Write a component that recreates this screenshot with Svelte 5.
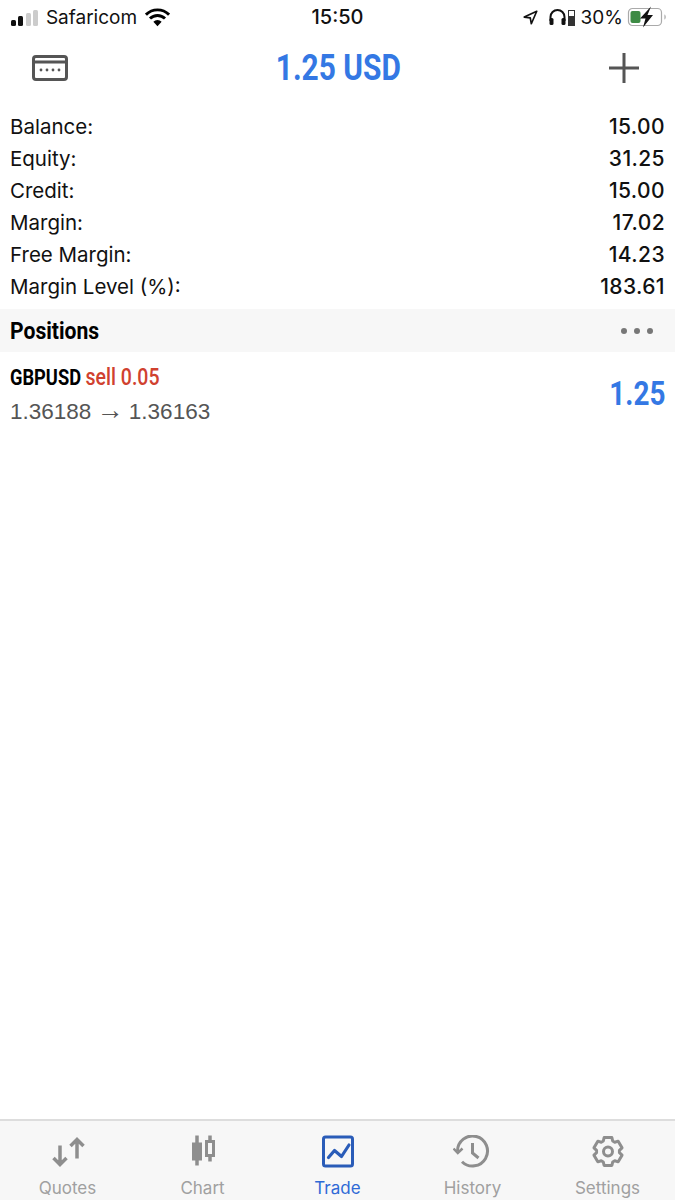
<script>
  const rows = [
    ["Balance:", "15.00"],
    ["Equity:", "31.25"],
    ["Credit:", "15.00"],
    ["Margin:", "17.02"],
    ["Free Margin:", "14.23"],
    ["Margin Level (%):", "183.61"],
  ];
  const tabs = ["Quotes", "Chart", "Trade", "History", "Settings"];

  // six toothed gear outline, centred on 16,16
  function gearPath() {
    let d = "";
    for (let i = 0; i < 6; i++) {
      const a = (i * Math.PI) / 3 - Math.PI / 2;
      const pts = [[11.5, -0.42], [14.5, -0.27], [14.5, 0.27], [11.5, 0.42]];
      for (const [r, o] of pts) {
        const x = 16 + r * Math.cos(a + o);
        const y = 16 + r * Math.sin(a + o);
        d += (d ? "L" : "M") + x.toFixed(2) + " " + y.toFixed(2);
      }
    }
    return d + "Z";
  }
</script>

<main class="screen">
  <div class="status">
    <div class="status-left">
      <span class="signal"><i class="on s1"></i><i class="on s2"></i><i class="s3"></i><i class="s4"></i></span>
      <span class="carrier">Safaricom</span>
      <svg class="wifi" width="25" height="19" viewBox="0 0 26 19">
        <path d="M1 6.500a17 17 0 0 1 24 0" fill="none" stroke="#000" stroke-width="3"/>
        <path d="M5.200 10.600a11 11 0 0 1 15.600 0" fill="none" stroke="#000" stroke-width="3"/>
        <path d="M13 18.500l-4.300-4.600a6 6 0 0 1 8.600 0z" fill="#000"/>
      </svg>
    </div>
    <div class="clock">15:50</div>
    <div class="status-right">
      <svg width="15" height="15" viewBox="0 0 18 18" class="loc">
        <path d="M16.500 1.500L1.500 8.500l7.200 1 1.300 7z" fill="none" stroke="#111" stroke-width="2" stroke-linejoin="round"/>
      </svg>
      <svg width="17" height="18" viewBox="0 0 17 18" class="phones">
        <path d="M1.500 13V9a7 7 0 0 1 14 0v4" fill="none" stroke="#111" stroke-width="2"/>
        <rect x="0.500" y="10" width="4" height="7" rx="1.500" fill="#111"/>
        <rect x="12.500" y="10" width="4" height="7" rx="1.500" fill="#111"/>
      </svg>
      <span class="tiny-batt"><b></b></span>
      <span class="pct">30%</span>
      <svg width="40" height="22" viewBox="0 0 40 22" class="batt">
        <rect x="1.500" y="2.500" width="33" height="17" rx="4" fill="#fff" stroke="#aaa" stroke-width="1.200"/>
        <rect x="3.500" y="5" width="10" height="12" rx="2" fill="#3d8b45"/>
        <path d="M37.500 8.500c1.500.4 1.500 4.600 0 5z" fill="#999"/>
        <path d="M24 0.500L13 12.500h5.500L16 21.500 26 9h-5.500z" fill="#111"/>
      </svg>
    </div>
  </div>

  <header class="nav">
    <svg class="card" width="36" height="26" viewBox="0 0 36 26">
      <rect x="1.500" y="1.500" width="33" height="23" rx="2.500" fill="none" stroke="#555" stroke-width="3"/>
      <rect x="2" y="5.500" width="32" height="3" fill="#555"/>
      <g fill="#555"><circle cx="9" cy="15" r="1.400"/><circle cx="15" cy="15" r="1.400"/><circle cx="21" cy="15" r="1.400"/><circle cx="27" cy="15" r="1.400"/></g>
    </svg>
    <h1>1.25 USD</h1>
    <svg class="plus" width="30" height="30" viewBox="0 0 30 30">
      <path d="M15 0v30M0 15h30" stroke="#555" stroke-width="3"/>
    </svg>
  </header>

  <section class="summary">
    {#each rows as [label, value]}
      <div class="row"><span>{label}</span><span class="val">{value}</span></div>
    {/each}
  </section>

  <div class="band">
    <h2>Positions</h2>
    <div class="dots"><i></i><i></i><i></i></div>
  </div>

  <div class="position">
    <div class="pos-left">
      <div class="pos-title"><b>GBPUSD</b> <em>sell 0.05</em></div>
      <div class="pos-prices">1.36188 <span class="arrow">→</span> 1.36163</div>
    </div>
    <div class="profit">1.25</div>
  </div>

  <nav class="tabbar">
    {#each tabs as t}
      <div class="tab" class:active={t === "Trade"}>
        {#if t === "Quotes"}
          <svg width="36" height="32" viewBox="0 0 36 32" fill="none" stroke="#8e8e8e" stroke-width="3.500">
            <path d="M10 10v19M3.500 22.500l6.500 6.500 6.500-6.500"/>
            <path d="M27 23V4M20.500 10.500l6.500-6.500 6.500 6.500"/>
          </svg>
        {:else if t === "Chart"}
          <svg width="24" height="32" viewBox="0 0 24 32">
            <path d="M6 0v30" stroke="#8e8e8e" stroke-width="3.500"/>
            <rect x="1" y="7" width="10" height="18" fill="#8e8e8e"/>
            <path d="M19 0v26" stroke="#8e8e8e" stroke-width="3.500"/>
            <rect x="15.500" y="6" width="7" height="14" fill="#f7f7f7" stroke="#8e8e8e" stroke-width="3"/>
          </svg>
        {:else if t === "Trade"}
          <svg width="32" height="32" viewBox="0 0 32 32" fill="none" stroke="#2a5cb8">
            <rect x="1.500" y="1.500" width="29" height="29" rx="2" stroke-width="3"/>
            <path d="M6.500 22l6-7 7 6 7.500-11.500" stroke-width="3.200" stroke-linecap="round" stroke-linejoin="round"/>
          </svg>
        {:else if t === "History"}
          <svg width="40" height="33" viewBox="0 0 40 33" fill="none" stroke="#8e8e8e" stroke-width="3">
            <path d="M4.500 16a15 15 0 1 1 4.500 10.700"/>
            <path d="M0.500 13.500l4.300 4.500 4.700-4.500" stroke-width="2.500"/>
            <path d="M19.500 8v10l6 5" stroke-width="3"/>
          </svg>
        {:else}
          <svg width="32" height="32" viewBox="0 0 32 32" fill="none" stroke="#8e8e8e" stroke-width="3" stroke-linejoin="round">
            <circle cx="16" cy="16" r="4.500"/>
            <path d={gearPath()}/>
          </svg>
        {/if}
        <span>{t}</span>
      </div>
    {/each}
  </nav>
</main>

<style>
  :global(body) { margin: 0; background: #fff; }
  .screen {
    width: 675px; height: 1200px; display: flex; flex-direction: column;
    font-family: Inter, "Liberation Sans", sans-serif; color: #111; overflow: hidden;
  }
  .status {
    height: 34px; display: flex; align-items: center; justify-content: space-between;
    padding: 0 8px 0 11px; font-size: 19px; position: relative;
  }
  .status-left, .status-right { display: flex; align-items: center; }
  .signal { display: flex; align-items: flex-end; gap: 2.300px; height: 16px; margin-right: 8px; margin-top: 1px; }
  .signal i { width: 5px; background: #ccc; border-radius: 1.500px; }
  .signal .on { background: #111; }
  .s1 { height: 6px; } .s2 { height: 10px; } .s3 { height: 13px; } .s4 { height: 16px; }
  .carrier { margin-right: 8px; }
  .clock { position: absolute; left: 0; right: 0; text-align: center; font-size: 20px; font-weight: 500; pointer-events: none; }
  .loc { margin-right: 11px; }
  .tiny-batt { width: 5px; height: 14px; border: 1px solid #333; margin: 2px 6px 0 2px; display: flex; align-items: flex-end; }
  .tiny-batt b { width: 100%; height: 9px; background: #333; }
  .pct { margin-right: 4px; }
  .nav { height: 67px; display: flex; align-items: center; justify-content: space-between; padding: 0 36px 0 32px; }
  .nav h1 {
    margin: 0; font: 700 36px Roboto, sans-serif; color: #3478e4; transform: scaleX(.83);
  }
  .summary { padding: 9px 10px 7px; }
  .row { height: 32px; display: flex; align-items: center; justify-content: space-between; font-size: 20.500px; }
  .val { font-weight: 500; font-size: 21px; letter-spacing: .4px; }
  .band {
    height: 43px; background: #f7f7f7; display: flex; align-items: center; justify-content: space-between;
    padding: 0 22px 0 10px;
  }
  .band h2 { margin: 0; font: 700 24px Roboto, sans-serif; color: #000; transform: scaleX(.88); transform-origin: left; }
  .dots { display: flex; gap: 7px; }
  .dots i { width: 6px; height: 6px; border-radius: 50%; background: #777; }
  .position { height: 82px; display: flex; align-items: center; justify-content: space-between; padding: 0 10px; }
  .pos-left { margin-top: 2px; }
  .pos-title { font: 700 22px/26px Roboto, sans-serif; color: #000; transform: scaleX(.83); transform-origin: left; }
  .pos-title b { font-weight: 700; }
  .pos-title em { font-style: normal; font-weight: 500; font-size: 23.500px; color: #d0412f; }
  .pos-prices { font: 22.500px/26px "Liberation Sans", sans-serif; color: #555; margin-top: 8px; }
  .arrow { font-size: 27px; line-height: 0; margin: 0 -1px; }
  .profit { font: 700 34px Roboto, sans-serif; color: #3478e4; transform: scaleX(.82); transform-origin: right; }
  .tabbar {
    margin-top: auto; height: 79px; background: #f7f7f7; border-top: 2px solid #ddd;
    display: grid; grid-template-columns: repeat(5, 1fr);
  }
  .tab { display: flex; flex-direction: column; align-items: center; padding-top: 14px; color: #a0a0a0; font-size: 17px; }
  .tab svg { height: 33px; }
  .tab span { margin-top: 10px; }
  .tab.active { color: #2f6ad6; }
</style>
